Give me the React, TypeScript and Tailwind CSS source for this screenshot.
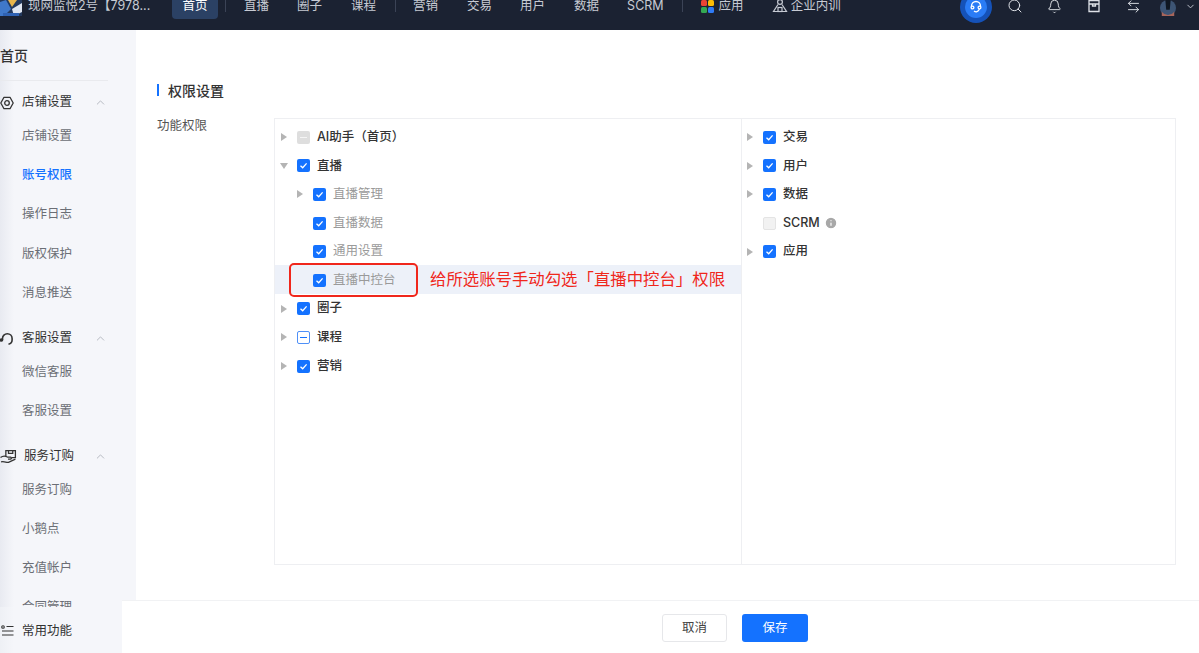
import { ChevronDown, ChevronUp, Search, Bell, Info, ArrowLeftRight } from "lucide-react";

const FONT = "font-['Inter','Noto_Sans_CJK_SC',sans-serif]";

function Sep({ className }: { className: string }) {
  return <span className={`h-[12px] w-px bg-[#3b4356] ${className}`} />;
}

function NavItem({ label, className = "" }: { label: string; className?: string }) {
  return <span className={`text-[12.5px] leading-none whitespace-nowrap text-[#c6cad3] ${className}`}>{label}</span>;
}

function Logo() {
  return (
    <svg width="22" height="16" viewBox="0 0 22 16" className="shrink-0 self-start">
      <rect width="22" height="16" fill="#23395e" />
      <path d="M0 2 L6 0 L11 9 L4 16 L0 16Z" fill="#3f78c9" />
      <path d="M8 0 L12 7 L17 0Z" fill="#e8b54a" />
      <path d="M12 9 L22 3 L22 12 L14 16Z" fill="#dfe6f2" />
      <path d="M3 13 L19 13 L19 16 L3 16Z" fill="#2f62b3" />
    </svg>
  );
}

function Header() {
  return (
    <header className="h-[30px] shrink-0 overflow-hidden bg-[#1b2232]">
      <div className="flex h-[12.5px] items-center">
        <Logo />
        <span className="ml-[6px] w-[144px] whitespace-nowrap text-[12.5px] leading-none text-[#c6cad3]">现网监悦2号【7978...</span>
        <span className="flex h-[19px] w-[46px] shrink-0 justify-center self-start rounded-b-[4px] bg-[#2b4164] text-[12.5px] leading-none text-white">
          首页
        </span>
        <Sep className="ml-[7px]" />
        <NavItem label="直播" className="ml-[18px]" />
        <NavItem label="圈子" className="ml-[28px]" />
        <NavItem label="课程" className="ml-[29px]" />
        <Sep className="ml-[19px]" />
        <NavItem label="营销" className="ml-[17px]" />
        <NavItem label="交易" className="ml-[29px]" />
        <NavItem label="用户" className="ml-[28px]" />
        <NavItem label="数据" className="ml-[29px]" />
        <NavItem label="SCRM" className="ml-[28px]" />
        <Sep className="ml-[18px]" />
        <svg width="13" height="13" viewBox="0 0 13 13" className="ml-[18px] shrink-0">
          <rect x="0" y="0" width="6" height="6" rx="1.5" fill="#ea4335" />
          <rect x="7" y="0" width="6" height="6" rx="1.5" fill="#fbbc05" />
          <rect x="0" y="7" width="6" height="6" rx="1.5" fill="#34a853" />
          <rect x="7" y="7" width="6" height="6" rx="1.5" fill="#2f7bf6" />
        </svg>
        <NavItem label="应用" className="ml-[5px]" />
        <svg width="16" height="14" viewBox="0 0 16 14" fill="none" stroke="#c6cad3" strokeWidth="1.2" className="ml-[28px] shrink-0">
          <circle cx="8" cy="3" r="2.4" />
          <path d="M6 5.5 L1.5 12.5 H14.5 L10 5.5" />
          <rect x="6" y="8.5" width="4" height="4" />
        </svg>
        <NavItem label="企业内训" className="ml-[3px]" />
        <div className="ml-[119px] mt-[2px] flex size-[32px] shrink-0 items-center justify-center rounded-full bg-[#1552b8]">
          <div className="flex size-[22px] items-center justify-center rounded-full bg-[#2a7cf6]">
            <svg width="14" height="14" viewBox="0 0 14 14" fill="none" stroke="white" strokeWidth="1.3">
              <path d="M2.5 7 V6 a4.5 4.5 0 0 1 9 0 V7" />
              <circle cx="3.5" cy="7.5" r="1.4" />
              <circle cx="10.5" cy="7.5" r="1.4" />
              <path d="M5 11 C7 12.5 9 12 10.5 9" />
            </svg>
          </div>
        </div>
        <Search size={16} strokeWidth={1.5} className="ml-[15px] shrink-0 text-[#dfe2e8]" />
        <Bell size={15} strokeWidth={1.5} className="ml-[24px] shrink-0 text-[#dfe2e8]" />
        <svg width="14" height="14" viewBox="0 0 14 14" fill="none" stroke="#dfe2e8" strokeWidth="1.3" className="ml-[25px] shrink-0">
          <path d="M2 1.5 H12 V12.5 H2 Z M2 5 H12 M5.5 5 V7 H8.5 V5" />
        </svg>
        <ArrowLeftRight size={15} strokeWidth={1.5} className="ml-[25px] shrink-0 text-[#dfe2e8]" />
        <svg width="16" height="16" viewBox="0 0 18 18" className="ml-[19px] shrink-0 self-start">
          <circle cx="9" cy="9" r="9" fill="#3d5575" />
          <path d="M6 0 H12 L11 11 H7 Z" fill="#0f1722" />
          <path d="M2 13 C5 18 13 18 16 13 L16 18 H2 Z" fill="#a8655a" />
        </svg>
        <ChevronDown size={11} className="ml-[9px] shrink-0 text-[#c6cad3]" />
      </div>
    </header>
  );
}

function GearIcon() {
  return (
    <svg width="14" height="14" viewBox="0 0 14 14" fill="none" stroke="#333" strokeWidth="1.3">
      <path d="M4 1.3 H10 L13.2 7 L10 12.7 H4 L0.8 7 Z" strokeLinejoin="round" />
      <circle cx="7" cy="7" r="2.3" />
    </svg>
  );
}

function HeadsetIcon() {
  return (
    <svg width="14" height="14" viewBox="0 0 14 14" fill="none" stroke="#333" strokeWidth="1.6">
      <path d="M2.5 8 V6.5 a4.8 4.8 0 0 1 9.6 0 V8" />
      <path d="M12.1 8 C12.1 10.5 10.5 11.8 8.5 12.3" />
      <circle cx="1.5" cy="8" r="1" fill="#333" />
    </svg>
  );
}

function ServiceIcon() {
  return (
    <svg width="17" height="15" viewBox="0 0 16 14" fill="none" stroke="#333" strokeWidth="1.2" className="shrink-0">
      <path d="M5.5 6.5 V1.5 H14.5 V8 H11" />
      <path d="M8 1.5 V4 H12 V1.5" />
      <path d="M0.5 8 C3 6 5 6.5 7 7.5 H10 C11 7.5 11 9.5 10 9.5 H7.5" />
      <path d="M1 12 C4 11 6 13 8 12.5 L14.5 9.5" />
    </svg>
  );
}

function MenuGroup({ icon, title, items, active, className = "", titleClass = "ml-[8px]" }: {
  icon: React.ReactNode;
  title: string;
  items: string[];
  active?: string;
  className?: string;
  titleClass?: string;
}) {
  return (
    <div className={className}>
      <div className="flex h-[28px] items-center">
        <span className="flex w-[14px] shrink-0">{icon}</span>
        <span className={`text-[12.5px] text-[#333] whitespace-nowrap ${titleClass}`}>{title}</span>
        <ChevronUp size={13} strokeWidth={1.5} className="ml-auto mr-[29px] text-[#a9adb5]" />
      </div>
      {items.map((item) => (
        <div
          key={item}
          className={`flex h-[39.25px] items-center pl-[22px] text-[12.5px] whitespace-nowrap ${
            item === active ? "font-medium text-[#1472ff]" : "text-[#6b6e75]"
          }`}
        >
          {item}
        </div>
      ))}
    </div>
  );
}

function Sidebar() {
  return (
    <aside className="relative z-[1] h-[570px] w-[136px] shrink-0 bg-[linear-gradient(90deg,#e8eaf1,#f5f6fa_14px)]">
      <div className="flex h-[50.5px] w-[108px] items-center border-b border-[#e9eaee] pt-[1px] text-[14px] font-medium text-[#333]">
        首页
      </div>
      <MenuGroup
        className="mt-[8px]"
        icon={<GearIcon />}
        title="店铺设置"
        items={["店铺设置", "账号权限", "操作日志", "版权保护", "消息推送"]}
        active="账号权限"
      />
      <MenuGroup
        className="mt-[12px]"
        icon={<HeadsetIcon />}
        title="客服设置"
        items={["微信客服", "客服设置"]}
      />
      <MenuGroup
        className="mt-[11px]"
        icon={<ServiceIcon />}
        title="服务订购"
        titleClass="ml-[10px]"
        items={["服务订购", "小鹅点", "充值帐户", "合同管理"]}
      />
    </aside>
  );
}

type CheckState = "checked" | "partial" | "disabled-partial" | "disabled";

function Check({ state }: { state: CheckState }) {
  if (state === "checked") {
    return (
      <span className="flex size-[13px] shrink-0 items-center justify-center rounded-[2px] bg-[#1472ff]">
        <svg width="9" height="9" viewBox="0 0 9 9" fill="none" stroke="white" strokeWidth="1.3">
          <path d="M1.5 4.7 L3.7 6.8 L7.6 2.4" />
        </svg>
      </span>
    );
  }
  if (state === "partial") {
    return (
      <span className="flex size-[13px] shrink-0 items-center justify-center rounded-[2px] border border-[#4f90f7]">
        <span className="h-[1.5px] w-[7px] bg-[#1472ff]" />
      </span>
    );
  }
  if (state === "disabled-partial") {
    return (
      <span className="flex size-[13px] shrink-0 items-center justify-center rounded-[2px] bg-[#dedede]">
        <span className="h-px w-[7px] bg-[#f5f5f5]" />
      </span>
    );
  }
  return <span className="size-[13px] shrink-0 rounded-[2px] border border-[#e4e4e4] bg-[#f2f2f2]" />;
}

function TreeRow({ label, state, arrow, level = 0, hover, info }: {
  label: string;
  state: CheckState;
  arrow?: "right" | "down";
  level?: 0 | 1;
  hover?: boolean;
  info?: boolean;
}) {
  return (
    <div className={`flex h-[28.6px] items-center pl-[5px] pt-[2px] ${hover ? "bg-[#edf1f9]" : ""}`}>
      <span className={`flex w-[7px] shrink-0 justify-center ${level === 1 ? "ml-[16px]" : ""}`}>
        {arrow === "right" && <span className="h-0 w-0 border-y-[4px] border-l-[6px] border-y-transparent border-l-[#b4b4b4]" />}
        {arrow === "down" && <span className="h-0 w-0 border-x-[4px] border-t-[6px] border-x-transparent border-t-[#b4b4b4]" />}
      </span>
      <span className="ml-[10px] flex">
        <Check state={state} />
      </span>
      <span className={`ml-[7px] whitespace-nowrap text-[12.5px] ${level === 1 ? "text-[#9a9a9a]" : "font-medium text-[#333]"}`}>
        {label}
      </span>
      {info && <Info size={14} fill="#a8a8a8" stroke="white" className="ml-[4px]" />}
    </div>
  );
}

function PermissionTree() {
  return (
    <div className="flex h-[447px] w-[902px] border border-[#eeeff2]">
      <div className="relative w-[467px] shrink-0 border-r border-[#eeeff2] pt-[3px]">
        <TreeRow label="AI助手（首页）" state="disabled-partial" arrow="right" />
        <TreeRow label="直播" state="checked" arrow="down" />
        <TreeRow label="直播管理" state="checked" arrow="right" level={1} />
        <TreeRow label="直播数据" state="checked" level={1} />
        <TreeRow label="通用设置" state="checked" level={1} />
        <TreeRow label="直播中控台" state="checked" level={1} hover />
        <TreeRow label="圈子" state="checked" arrow="right" />
        <TreeRow label="课程" state="partial" arrow="right" />
        <TreeRow label="营销" state="checked" arrow="right" />
        {/* 截图上的标注 */}
        <div className="absolute left-[14px] top-[144px] h-[34px] w-[129px] rounded-[5px] border-2 border-[#f0271c]" />
        <span className="absolute left-[155px] top-[146px] whitespace-nowrap text-[16.4px] leading-[28px] text-[#f0271c]">
          给所选账号手动勾选「直播中控台」权限
        </span>
      </div>
      <div className="-ml-px flex-1 pt-[3px]">
        <TreeRow label="交易" state="checked" arrow="right" />
        <TreeRow label="用户" state="checked" arrow="right" />
        <TreeRow label="数据" state="checked" arrow="right" />
        <TreeRow label="SCRM" state="disabled" info />
        <TreeRow label="应用" state="checked" arrow="right" />
      </div>
    </div>
  );
}

function Content() {
  return (
    <main className="min-w-0 flex-1 pl-[21px] pt-[52px]">
      <div className="flex h-[16px] items-center">
        <span className="h-[12px] w-[2px] bg-[#1472ff]" />
        <span className="ml-[9px] text-[14px] font-medium text-[#333]">权限设置</span>
      </div>
      <div className="mt-[20px] flex">
        <span className="w-[117px] shrink-0 pt-[1px] text-[12.5px] leading-[14px] text-[#555]">功能权限</span>
        <PermissionTree />
      </div>
    </main>
  );
}

export default function App() {
  return (
    <div className={`flex h-[653px] w-[1199px] flex-col overflow-hidden bg-white ${FONT}`}>
      <Header />
      <div className="flex h-[570px] shrink-0">
        <Sidebar />
        <Content />
      </div>
      <div className="flex flex-1">
        <div className="w-[122px] shrink-0 bg-[linear-gradient(90deg,#e8eaf1,#f5f6fa_14px)] pt-[7px]">
          <div className="relative z-10 flex h-[46px] items-center bg-[linear-gradient(90deg,#eef0f5,#f5f6fa_14px)] pt-[2px] text-[12.5px] text-[#333]">
            <svg width="14" height="12" viewBox="0 0 14 12" fill="none" stroke="#333" strokeWidth="1.1" className="ml-[1px]">
              <circle cx="2" cy="2" r="1.3" />
              <path d="M5.5 1.5 H12.5 M1 6 H12.5 M1 10 H12.5" />
            </svg>
            <span className="ml-[7px]">常用功能</span>
          </div>
        </div>
        <div className="flex flex-1 gap-[15px] border-t border-[#f1f2f4] pl-[540px] pt-[13px]">
          <button className="h-[28px] w-[65px] rounded-[3px] border border-[#e6e7ea] text-[12.5px] text-[#444]">取消</button>
          <button className="h-[28px] w-[66px] rounded-[3px] bg-[#1472ff] text-[12.5px] text-white">保存</button>
        </div>
      </div>
    </div>
  );
}
